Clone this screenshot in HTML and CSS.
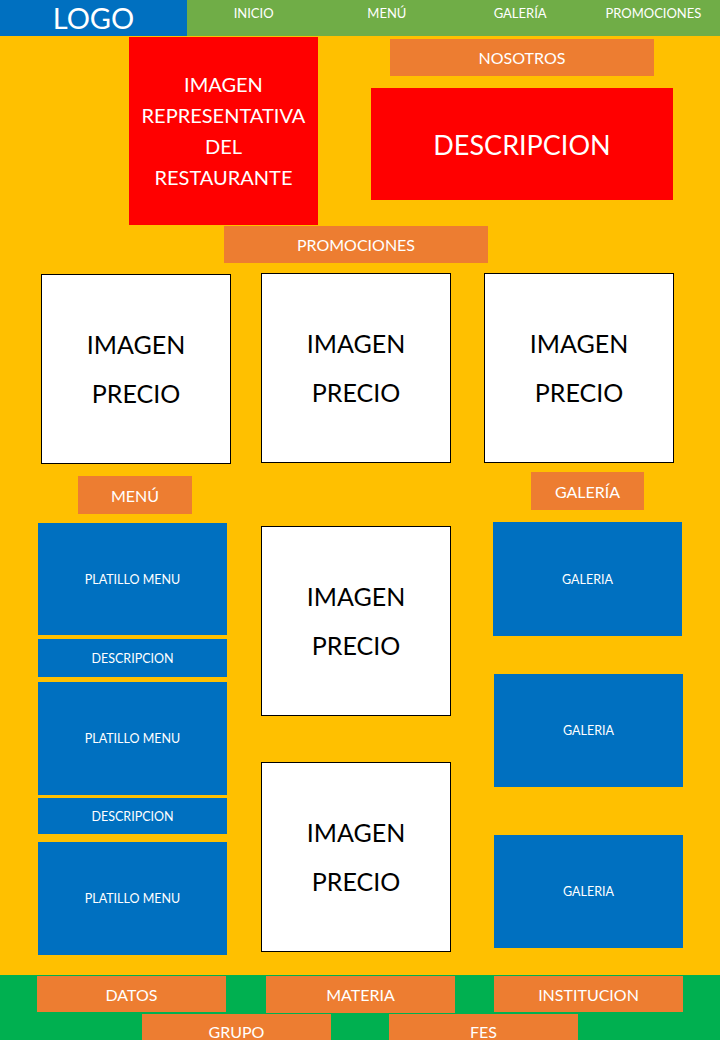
FILE: index.html
```html
<!DOCTYPE html>
<html>
    <head>
        <title>Restaurante - boceto</title>
        <link rel="stylesheet" href="styles.css">
    </head>
    <body>
        <header class="topbar">
            <div class="logo">LOGO</div>
            <nav class="nav">
                <span>INICIO</span>
                <span>MENÚ</span>
                <span>GALERÍA</span>
                <span>PROMOCIONES</span>
            </nav>
        </header>

        <main class="stage">
            <section class="intro">
                <div class="hero">
                    <span>IMAGEN</span>
                    <span>REPRESENTATIVA</span>
                    <span>DEL</span>
                    <span>RESTAURANTE</span>
                </div>
                <div class="about">
                    <div class="tag nosotros">NOSOTROS</div>
                    <div class="about-text">DESCRIPCION</div>
                </div>
            </section>

            <div class="tag promo-title">PROMOCIONES</div>

            <section class="promos">
                <div class="card card-a"><span>IMAGEN</span><span>PRECIO</span></div>
                <div class="card card-b"><span>IMAGEN</span><span>PRECIO</span></div>
                <div class="card card-c"><span>IMAGEN</span><span>PRECIO</span></div>
            </section>

            <section class="lower">
                <div class="col col-menu">
                    <div class="tag menu-title">MENÚ</div>
                    <div class="tile dish dish-1">PLATILLO MENU</div>
                    <div class="tile desc desc-1">DESCRIPCION</div>
                    <div class="tile dish dish-2">PLATILLO MENU</div>
                    <div class="tile desc desc-2">DESCRIPCION</div>
                    <div class="tile dish dish-3">PLATILLO MENU</div>
                </div>
                <div class="col col-promo">
                    <div class="card card-d"><span>IMAGEN</span><span>PRECIO</span></div>
                    <div class="card card-e"><span>IMAGEN</span><span>PRECIO</span></div>
                </div>
                <div class="col col-gallery">
                    <div class="tag gallery-title">GALERÍA</div>
                    <div class="tile photo photo-1">GALERIA</div>
                    <div class="tile photo photo-2">GALERIA</div>
                    <div class="tile photo photo-3">GALERIA</div>
                </div>
            </section>
        </main>

        <footer class="footer">
            <div class="foot-row first">
                <div class="foot-item datos">DATOS</div>
                <div class="foot-item materia">MATERIA</div>
                <div class="foot-item institucion">INSTITUCION</div>
            </div>
            <div class="foot-row second">
                <div class="foot-item grupo">GRUPO</div>
                <div class="foot-item fes">FES</div>
            </div>
        </footer>
    </body>
</html>
```

FILE: styles.css
```css
body {
    margin: 0;
    width: 720px;
    height: 1040px;
    overflow: hidden;
    font-family: Lato, "Open Sans", sans-serif;
    color: #fff;
}

/* barra superior */
.topbar {
    display: flex;
    height: 36px;
}
.logo {
    width: 187px;
    background: #0070c0;
    font-size: 29px;
    line-height: 36px;
    text-align: center;
}
.nav {
    flex: 1;
    display: flex;
    background: #70ad47;
}
.nav span {
    flex: 1;
    text-align: center;
    font-size: 13px;
    padding-top: 5px;
}

/* area amarilla */
.stage {
    height: 939px;
    background: #ffc000;
    display: flex;
    flex-direction: column;
    align-items: flex-start;
}
.tag {
    background: #ed7d31;
    font-size: 16px;
    display: flex;
    align-items: center;
    justify-content: center;
}

.intro {
    display: flex;
    align-items: flex-start;
    margin: 1px 0 0 129px;
}
.hero {
    width: 189px;
    height: 188px;
    background: #ff0000;
    display: flex;
    flex-direction: column;
    justify-content: center;
    align-items: center;
    font-size: 20px;
    line-height: 31px;
}
.about {
    margin-left: 53px;
}
.nosotros {
    margin: 2px 0 0 19px;
    width: 264px;
    height: 37px;
}
.about-text {
    margin-top: 12px;
    width: 302px;
    height: 112px;
    background: #ff0000;
    font-size: 27px;
    display: flex;
    align-items: center;
    justify-content: center;
}

.promo-title {
    margin: 1px 0 0 224px;
    width: 264px;
    height: 37px;
}

/* tarjetas blancas */
.promos {
    display: flex;
    align-items: flex-start;
    margin-top: 10px;
}
.card {
    box-sizing: border-box;
    width: 190px;
    height: 190px;
    background: #fff;
    border: 1px solid #000;
    color: #000;
    font-size: 25px;
    line-height: 49px;
    display: flex;
    flex-direction: column;
    align-items: center;
    justify-content: center;
}
.card-a { margin: 1px 0 0 41px; }
.card-b { margin-left: 30px; }
.card-c { margin-left: 33px; }

/* columnas inferiores */
.lower {
    display: flex;
    align-items: flex-start;
}
.col {
    display: flex;
    flex-direction: column;
    align-items: flex-start;
}
.col-menu { margin-left: 38px; width: 189px; }
.col-promo { margin-left: 34px; width: 190px; }
.col-gallery { margin-left: 42px; width: 191px; }

.tile {
    width: 189px;
    background: #0070c0;
    font-size: 12.5px;
    display: flex;
    align-items: center;
    justify-content: center;
}
.menu-title { margin: 12px 0 0 40px; width: 114px; height: 38px; }
.dish-1 { margin-top: 9px; height: 112px; }
.desc-1 { margin-top: 4px; height: 38px; }
.dish-2 { margin-top: 5px; height: 113px; }
.desc-2 { margin-top: 3px; height: 36px; }
.dish-3 { margin-top: 8px; height: 113px; }

.card-d { margin-top: 62px; }
.card-e { margin-top: 46px; }

.gallery-title { margin: 8px 0 0 38px; width: 113px; height: 38px; }
.photo-1 { margin-top: 12px; height: 114px; }
.photo-2 { margin: 38px 0 0 1px; height: 113px; }
.photo-3 { margin: 48px 0 0 1px; height: 113px; }

/* pie */
.footer {
    height: 65px;
    background: #00b050;
    overflow: hidden;
}
.foot-row {
    display: flex;
    align-items: flex-start;
}
.foot-row.first { padding-top: 1px; }
.foot-row.second { margin-top: 1px; }
.foot-item {
    width: 189px;
    height: 36px;
    background: #ed7d31;
    font-size: 16px;
    display: flex;
    align-items: center;
    justify-content: center;
}
.datos { margin-left: 37px; }
.materia { margin-left: 40px; height: 37px; }
.institucion { margin-left: 39px; }
.grupo { margin-left: 142px; height: 34px; }
.fes { margin-left: 58px; height: 34px; }
```
